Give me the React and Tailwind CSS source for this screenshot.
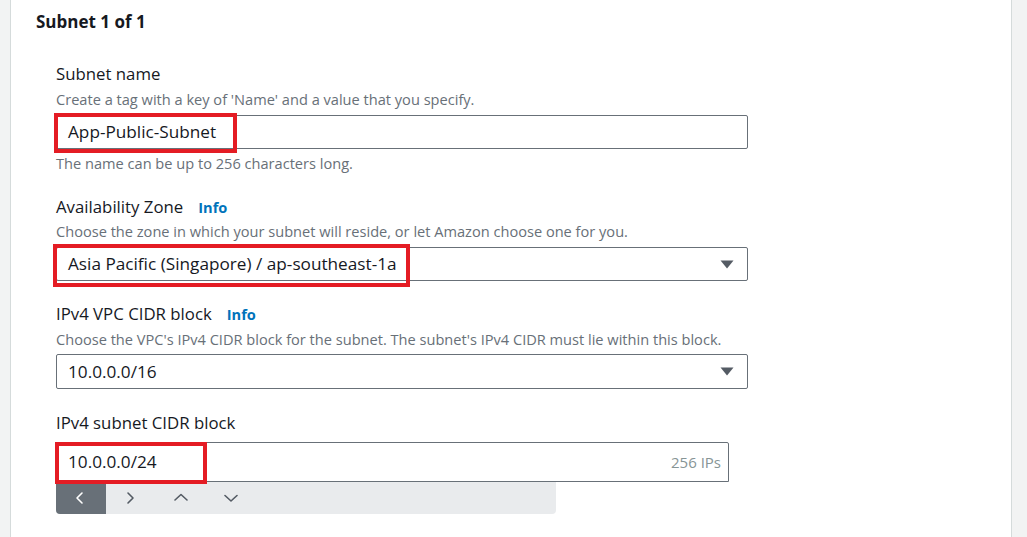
import React from 'react';

const font = { fontFamily: '"Open Sans", "Noto Sans", Arial, sans-serif' };

function Caret() {
  return (
    <svg width="14" height="9" viewBox="0 0 14 9" className="shrink-0">
      <path d="M0.5 0.5 H13.5 L7 8.5 Z" fill="#545b64" />
    </svg>
  );
}

function Chevron({ dir, color }) {
  const paths = {
    left: 'M8 2 L3 7 L8 12',
    right: 'M4 2 L9 7 L4 12',
    up: 'M1 9 L7 3.5 L13 9',
    down: 'M1 4.5 L7 10 L13 4.5',
  };
  return (
    <svg width="14" height="14" viewBox="0 0 14 14">
      <path d={paths[dir]} fill="none" stroke={color} strokeWidth="1.6" strokeLinecap="round" strokeLinejoin="round" />
    </svg>
  );
}

function Mark({ className }) {
  // red annotation box drawn over the screenshot
  return <div className={`pointer-events-none absolute border-[4px] border-[#e41c24] ${className}`} />;
}

function Label({ children, info, className = '' }) {
  return (
    <div className={`flex items-center text-[16.8px] leading-[22px] text-[#16191f] ${className}`}>
      <span>{children}</span>
      {info && <span className="ml-[15px] text-[14.6px] font-bold text-[#0073bb]">Info</span>}
    </div>
  );
}

function Desc({ children, className = '' }) {
  return <div className={`text-[14.6px] leading-[18px] text-[#687078] ${className}`}>{children}</div>;
}

export default function App() {
  return (
    <div className="flex h-[537px] w-[1027px] overflow-hidden bg-[#f2f3f3]" style={font}>
      <div className="ml-[10px] w-[1002px] border-x border-[#d5dbdb] bg-white pl-[25px] pt-[11px]">
        <h2 className="text-[17px] font-bold leading-[22px] text-[#16191f]">Subnet 1 of 1</h2>

        <div className="pl-[20px]">
          {/* Subnet name */}
          <Label className="mt-[30px]">Subnet name</Label>
          <Desc className="mt-[5px]">Create a tag with a key of 'Name' and a value that you specify.</Desc>
          <div className="relative mt-[7px] flex h-[34px] w-[692px] items-center rounded-[2px] border border-[#687078] px-[11px] text-[17.2px] text-[#16191f]">
            App-Public-Subnet
            <Mark className="left-[-3px] top-[-3px] h-[40px] w-[183px]" />
          </div>
          <Desc className="mt-[5px]">The name can be up to 256 characters long.</Desc>

          {/* Availability Zone */}
          <Label info className="mt-[24px]">Availability Zone</Label>
          <Desc className="mt-[4px]">Choose the zone in which your subnet will reside, or let Amazon choose one for you.</Desc>
          <div className="relative mt-[7px] flex h-[34px] w-[692px] items-center justify-between rounded-[2px] border border-[#687078] pl-[11px] pr-[13px] text-[17.2px] text-[#16191f]">
            <span>Asia Pacific (Singapore) / ap-southeast-1a</span>
            <Caret />
            <Mark className="left-[-4px] top-[-4px] h-[43px] w-[357px]" />
          </div>

          {/* IPv4 VPC CIDR block */}
          <Label info className="mt-[22px]">IPv4 VPC CIDR block</Label>
          <Desc className="mt-[5px]">Choose the VPC's IPv4 CIDR block for the subnet. The subnet's IPv4 CIDR must lie within this block.</Desc>
          <div className="mt-[6px] flex h-[35px] w-[692px] items-center justify-between rounded-[2px] border border-[#687078] pl-[11px] pr-[13px] text-[17.2px] text-[#16191f]">
            <span>10.0.0.0/16</span>
            <Caret />
          </div>

          {/* IPv4 subnet CIDR block */}
          <Label className="mt-[23px]">IPv4 subnet CIDR block</Label>
          <div className="relative mt-[8px] flex h-[40px] w-[673px] items-center justify-between rounded-t-[2px] border border-[#687078] pl-[11px] pr-[7px] text-[17.2px] text-[#16191f]">
            <span>10.0.0.0/24</span>
            <span className="text-[15px] text-[#879596]">256 IPs</span>
            <Mark className="left-[-2px] top-[-1px] h-[42px] w-[152px]" />
          </div>
          <div className="flex h-[32px] w-[500px] overflow-hidden rounded-b-[4px] bg-[#e9ebed]">
            <button className="flex w-[50px] items-center justify-center bg-[#687078]">
              <Chevron dir="left" color="#ffffff" />
            </button>
            <button className="flex w-[50px] items-center justify-center">
              <Chevron dir="right" color="#545b64" />
            </button>
            <button className="flex w-[50px] items-center justify-center">
              <Chevron dir="up" color="#545b64" />
            </button>
            <button className="flex w-[50px] items-center justify-center">
              <Chevron dir="down" color="#545b64" />
            </button>
          </div>
        </div>
      </div>
    </div>
  );
}
